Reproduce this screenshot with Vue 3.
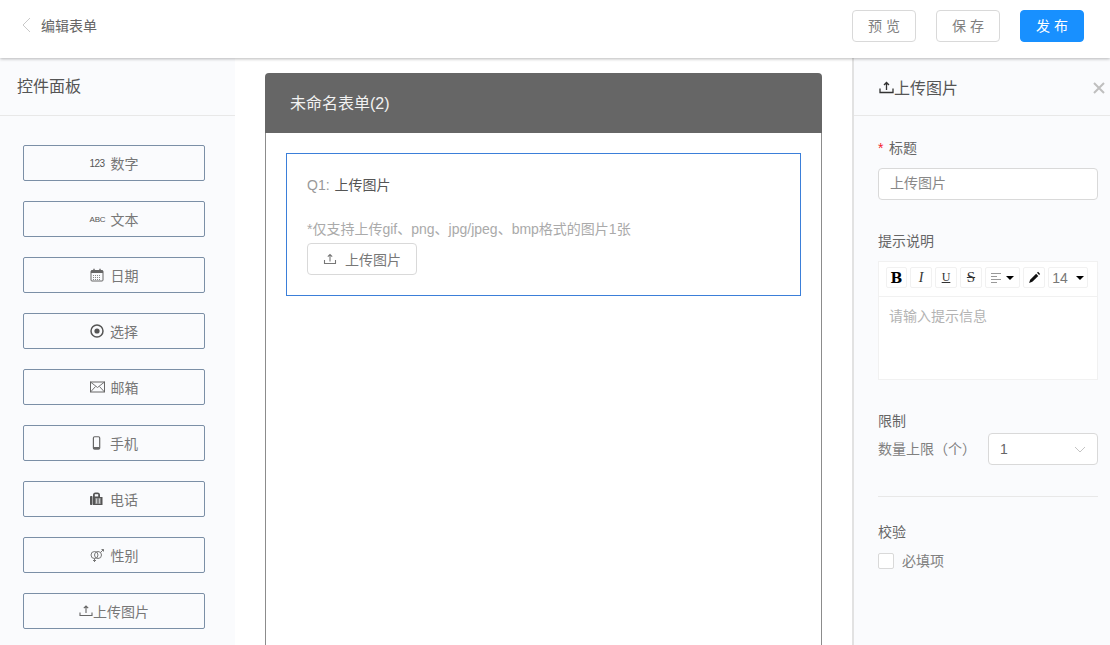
<script setup>
const controls = [
  { key: 'num', label: '数字', gap: 7 },
  { key: 'abc', label: '文本', gap: 7 },
  { key: 'date', label: '日期', gap: 7 },
  { key: 'radio', label: '选择', gap: 6 },
  { key: 'mail', label: '邮箱', gap: 6 },
  { key: 'phone', label: '手机', gap: 9 },
  { key: 'tel', label: '电话', gap: 7 },
  { key: 'gender', label: '性别', gap: 6 },
  { key: 'upload', label: '上传图片', gap: 0 }
]
</script>

<template>
  <div class="page">
    <header class="top">
      <div class="back">
        <svg width="12" height="16" viewBox="0 0 12 16"><path d="M10 1 3 8l7 7" fill="none" stroke="#c9c9c9" stroke-width="1"/></svg>
        <span>编辑表单</span>
      </div>
      <div class="actions">
        <button class="btn">预 览</button>
        <button class="btn">保 存</button>
        <button class="btn primary">发 布</button>
      </div>
    </header>
    <div class="main">
      <aside class="left">
        <div class="left-head">控件面板</div>
        <div class="ctrl-list">
          <div v-for="c in controls" :key="c.key" class="ctrl" :style="{ gap: c.gap + 'px' }">
            <span v-if="c.key === 'num'" class="mini">123</span>
            <span v-else-if="c.key === 'abc'" class="mini abc">ABC</span>
            <svg v-else-if="c.key === 'date'" width="14" height="14" viewBox="0 0 14 14"><rect x="1" y="2.5" width="12" height="10.5" rx="1" fill="none" stroke="#666"/><path d="M1 2.5h12v2.500H1z" fill="#666"/><path d="M4 .8v2.500M10 .8v2.500" stroke="#666" stroke-width="1.400"/><path d="M3 7.500h8M3 9.500h8M3 11.500h8" stroke="#888" stroke-dasharray="1 1"/></svg>
            <svg v-else-if="c.key === 'radio'" width="14" height="14" viewBox="0 0 14 14"><circle cx="7" cy="7" r="6" fill="none" stroke="#555" stroke-width="1.500"/><circle cx="7" cy="7" r="2.600" fill="#555"/></svg>
            <svg v-else-if="c.key === 'mail'" width="15" height="14" viewBox="0 0 15 14"><rect x=".5" y="2" width="14" height="10" fill="none" stroke="#666"/><path d="m.5 2 7 5.500 7-5.500M.5 12l5-5.500M14.500 12l-5-5.500" fill="none" stroke="#666" stroke-width=".9"/></svg>
            <svg v-else-if="c.key === 'phone'" width="11" height="14" viewBox="0 0 11 14"><rect x="3.400" y=".75" width="6.300" height="12.500" rx="1.200" fill="none" stroke="#666" stroke-width="1.200"/><path d="M3.700 11h5.700v2H3.700z" fill="#666"/></svg>
            <svg v-else-if="c.key === 'tel'" width="13" height="14" viewBox="0 0 13 14"><rect x="0" y="4" width="2.500" height="9" rx=".8" fill="#555"/><path d="M3 5V3a2.500 2.500 0 0 1 2.500-2.500h2A2.500 2.500 0 0 1 10 3v2h2.500v8H3z" fill="#555"/><rect x="4.800" y="2.200" width="3.400" height="2.300" fill="#fafbfd"/><path d="M5 7h6M5 9h6M5 11h6M6.500 6.500v5M9.500 6.500v5" stroke="#fafbfd" stroke-width=".6"/></svg>
            <svg v-else-if="c.key === 'gender'" width="15" height="14" viewBox="0 0 15 14"><circle cx="4.500" cy="7" r="3.500" fill="none" stroke="#777"/><circle cx="8" cy="7" r="3.500" fill="none" stroke="#777"/><path d="M4.500 10.500V14M3 12.500h3M10.500 4.500 13.500 1.500M11.500 1.500h2v2" fill="none" stroke="#777"/></svg>
            <svg v-else width="14" height="14" viewBox="0 0 14 14"><path d="M1 8.500v3h12v-3M7 9V2M4.800 4.200 7 2l2.200 2.200" fill="none" stroke="#666" stroke-width="1.100"/></svg>
            <span>{{ c.label }}</span>
          </div>
        </div>
      </aside>
      <section class="center">
        <div class="form">
          <div class="form-head">未命名表单(2)</div>
          <div class="form-body">
            <div class="question">
              <div class="q-title"><span class="q-no">Q1:</span> <span class="q-name">上传图片</span></div>
              <div class="q-hint">*仅支持上传gif、png、jpg/jpeg、bmp格式的图片1张</div>
              <div class="upload-btn">
                <svg width="14" height="14" viewBox="0 0 14 14"><path d="M1.500 8v3.500h11V8M7 9.500V2.500M4.800 4.700 7 2.500l2.200 2.200" fill="none" stroke="#777" stroke-width="1.100"/></svg>
                <span>上传图片</span>
              </div>
            </div>
          </div>
        </div>
      </section>
      <aside class="right">
        <div class="right-head">
          <div class="right-title">
            <svg width="15" height="15" viewBox="0 0 15 15"><path d="M1 8.500v4h13v-4M7.500 10V2.500M5 5l2.500-2.500L10 5" fill="none" stroke="#333" stroke-width="1.300"/></svg>
            <span>上传图片</span>
          </div>
          <svg class="close" width="12" height="12" viewBox="0 0 12 12"><path d="m1 1 10 10M11 1 1 11" stroke="#bfbfbf" stroke-width="2"/></svg>
        </div>
        <div class="right-body">
          <div class="label"><i>*</i>标题</div>
          <div class="input"><span>上传图片</span></div>
          <div class="label tip">提示说明</div>
          <div class="editor">
            <div class="toolbar">
              <span class="tool bold">B</span>
              <span class="tool italic">I</span>
              <span class="tool under">U</span>
              <span class="tool strike">S</span>
              <span class="tool align">
                <svg width="11" height="11" viewBox="0 0 11 11"><path d="M0 1.500h10M0 4.500h6M0 7.500h10M0 10.500h6" stroke="#999"/></svg>
                <b class="caret"></b>
              </span>
              <span class="tool pen">
                <svg width="13" height="13" viewBox="0 0 12 12"><path d="M1 11l1-3 5.500-5.500 2 2L4 10z" fill="#111"/><path d="M8.300 1.700l1-.9 1.900 1.900-.9 1z" fill="#111"/></svg>
              </span>
              <span class="tool size">14<b class="caret"></b></span>
            </div>
            <div class="editor-body">请输入提示信息</div>
          </div>
          <div class="label limit">限制</div>
          <div class="limit-row">
            <span class="limit-label">数量上限（个）</span>
            <div class="select">
              <span>1</span>
              <svg width="12" height="7" viewBox="0 0 12 7"><path d="M1 1l5 5 5-5" fill="none" stroke="#c4c4c4"/></svg>
            </div>
          </div>
          <div class="divider"></div>
          <div class="label check-title">校验</div>
          <div class="check-row">
            <span class="box"></span>
            <span class="check-text">必填项</span>
          </div>
        </div>
      </aside>
    </div>
  </div>
</template>

<style>
html, body { margin: 0; height: 100%; overflow: hidden; background: #fff; }
</style>

<style scoped>
* { box-sizing: border-box; }
.page {
  width: 1110px; height: 645px; overflow: hidden; display: flex; flex-direction: column;
  font-family: "Liberation Sans", "Noto Sans CJK SC", sans-serif; font-size: 14px; color: #666;
}
.top {
  height: 58px; flex: none; display: flex; justify-content: space-between; align-items: center;
  padding: 0 26px 6px 20px; background: #fff; position: relative; z-index: 2;
  box-shadow: 0 1px 3px rgba(0, 0, 0, .28);
}
.back { display: flex; align-items: center; gap: 9px; color: #666; }
.back span { padding-bottom: 2px; }
.back svg { margin-bottom: 2px; }
.actions { display: flex; gap: 20px; }
.btn {
  width: 64px; height: 32px; padding: 0 0 2px; font: inherit; color: #808080; background: #fff;
  border: 1px solid #d9d9d9; border-radius: 4px;
}
.btn.primary { background: #1890ff; border-color: #1890ff; color: #fff; }
.main { flex: 1; display: flex; min-height: 0; }
.left { width: 235px; flex: none; background: #fafbfd; }
.left-head {
  height: 58px; border-bottom: 1px solid #e8e8e8; padding: 0 17px 3px; display: flex; align-items: center;
  font-size: 16px; color: #555;
}
.ctrl-list { padding: 29px 30px 0 23px; display: flex; flex-direction: column; gap: 20px; }
.ctrl {
  height: 36px; display: flex; align-items: center; justify-content: center; color: #777;
  border: 1px solid #7b8fa6; border-radius: 2px;
}
.mini { width: 14px; font-size: 10px; letter-spacing: -.6px; color: #555; text-align: center; line-height: 14px; white-space: nowrap; padding-top: 1px; }
.mini.abc { font-size: 8px; letter-spacing: -.2px; }
.center { flex: 1; padding: 15px 30px 0; background: #fff; min-width: 0; }
.form { height: 620px; display: flex; flex-direction: column; }
.form-head {
  height: 60px; flex: none; background: #666; color: #f2f2f2; border-radius: 4px 4px 0 0;
  padding: 0 25px 2px; display: flex; align-items: center; font-size: 16px;
}
.form-body { flex: 1; border: 1px solid #8c8c8c; border-top: 0; padding: 20px 20px 0; }
.question { height: 143px; border: 1px solid #3b7fd9; padding: 20px 20px 0; }
.q-title { height: 22px; line-height: 22px; color: #555; }
.q-no { color: #999; margin-right: 1px; }
.q-name { color: #555; }
.q-hint { margin-top: 22px; height: 22px; line-height: 22px; color: #aaa; }
.upload-btn {
  width: 110px; height: 32px; margin-top: 3px; border: 1px solid #d9d9d9; border-radius: 4px; background: #fff;
  display: flex; align-items: center; justify-content: center; gap: 8px; color: #777;
}
.upload-btn span { padding-bottom: 1px; }
.right { width: 258px; flex: none; background: #fafbfd; border-left: 2px solid #e2e2e2; }
.right-head {
  height: 58px; border-bottom: 1px solid #e8e8e8; padding: 2px 5px 0 25px; display: flex; align-items: center; justify-content: space-between;
}
.right-title { display: flex; align-items: center; font-size: 16px; color: #555; }
.right-title span { padding-bottom: 2px; }
.right-body { padding: 21px 12px 0 24px; }
.label { height: 22px; line-height: 22px; color: #666; }
.label i { color: #f5222d; font-style: normal; margin-right: 5.500px; font-family: "Liberation Sans", sans-serif; }
.input {
  margin-top: 9px; height: 32px; line-height: 28px; padding: 0 11px; background: #fff; color: #888;
  border: 1px solid #d9d9d9; border-radius: 4px;
}
.tip { margin-top: 30px; }
.editor { margin-top: 9px; height: 119px; background: #fff; border: 1px solid #f1f1f1; display: flex; flex-direction: column; }
.toolbar { height: 35px; flex: none; border-bottom: 1px solid #f1f1f1; padding: 5px 0 0 7px; display: flex; gap: 3px; background: #fff; }
.tool {
  height: 21px; width: 22px; border: 1px solid #f1f1f1; border-radius: 2px; background: #fff; display: flex; align-items: center; justify-content: center;
  font-size: 12px; color: #333;
}
.bold { width: 21px; font: bold 14px "DejaVu Serif", serif; color: #000; }
.italic { font: italic 14px "Liberation Serif", serif; }
.under { font: 12px "Liberation Serif", serif; text-decoration: underline; }
.strike { font: 15px "Liberation Serif", serif; text-decoration: line-through; }
.align { width: 35px; gap: 4px; }
.pen { width: 22px; }
.size { width: 40px; gap: 8px; color: #777; font-size: 14px; }
.caret { width: 0; height: 0; border: 4px solid transparent; border-top: 4px solid #000; border-bottom: 0; }
.editor-body { padding: 8px 10px 0; color: #b3b3b3; }
.limit { margin-top: 30px; }
.limit-row { display: flex; align-items: center; justify-content: space-between; margin-top: 1px; }
.limit-label { color: #808080; padding-bottom: 2px; }
.select {
  width: 110px; height: 32px; border: 1px solid #d9d9d9; border-radius: 4px; background: #fff; padding: 0 11px;
  display: flex; align-items: center; justify-content: space-between; color: #666;
}
.divider { margin-top: 31px; height: 1px; background: #e8e8e8; }
.check-title { margin-top: 24px; }
.check-row { margin-top: 7px; display: flex; align-items: center; gap: 8px; color: #808080; height: 22px; }
.check-text { padding-bottom: 2px; }
.box { width: 16px; height: 16px; background: #fff; border: 1px solid #d9d9d9; border-radius: 2px; }
</style>
